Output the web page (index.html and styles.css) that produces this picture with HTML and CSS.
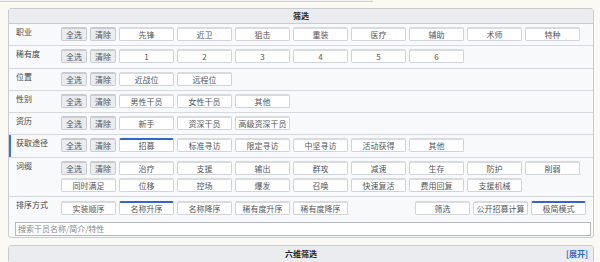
FILE: index.html
```html
<!DOCTYPE html>
<html>
    <head>
        <meta charset="UTF-8">
        <title>筛选</title>
        <link rel="stylesheet" href="styles.css">
    </head>
    <body>
        <div class="topbar"></div>

        <div class="panel">
            <div class="panel-head">筛选</div>

            <div class="row">
                <div class="row-label">职业</div>
                <div class="row-body">
                    <span class="pair"><span class="ctl">全选</span><span class="ctl">清除</span></span>
                    <span class="opt">先锋</span>
                    <span class="opt">近卫</span>
                    <span class="opt">狙击</span>
                    <span class="opt">重装</span>
                    <span class="opt">医疗</span>
                    <span class="opt">辅助</span>
                    <span class="opt">术师</span>
                    <span class="opt">特种</span>
                </div>
            </div>

            <div class="row">
                <div class="row-label">稀有度</div>
                <div class="row-body">
                    <span class="pair"><span class="ctl">全选</span><span class="ctl">清除</span></span>
                    <span class="opt">1</span>
                    <span class="opt">2</span>
                    <span class="opt">3</span>
                    <span class="opt">4</span>
                    <span class="opt">5</span>
                    <span class="opt">6</span>
                </div>
            </div>

            <div class="row">
                <div class="row-label">位置</div>
                <div class="row-body">
                    <span class="pair"><span class="ctl">全选</span><span class="ctl">清除</span></span>
                    <span class="opt">近战位</span>
                    <span class="opt">远程位</span>
                </div>
            </div>

            <div class="row">
                <div class="row-label">性别</div>
                <div class="row-body">
                    <span class="pair"><span class="ctl">全选</span><span class="ctl">清除</span></span>
                    <span class="opt">男性干员</span>
                    <span class="opt">女性干员</span>
                    <span class="opt">其他</span>
                </div>
            </div>

            <div class="row">
                <div class="row-label">资历</div>
                <div class="row-body">
                    <span class="pair"><span class="ctl">全选</span><span class="ctl">清除</span></span>
                    <span class="opt">新手</span>
                    <span class="opt">资深干员</span>
                    <span class="opt">高级资深干员</span>
                </div>
            </div>

            <div class="row focus">
                <div class="row-label">获取途径</div>
                <div class="row-body">
                    <span class="pair"><span class="ctl">全选</span><span class="ctl">清除</span></span>
                    <span class="opt on">招募</span>
                    <span class="opt">标准寻访</span>
                    <span class="opt">限定寻访</span>
                    <span class="opt">中坚寻访</span>
                    <span class="opt">活动获得</span>
                    <span class="opt">其他</span>
                </div>
            </div>

            <div class="row">
                <div class="row-label">词缀</div>
                <div class="row-body">
                    <span class="pair"><span class="ctl">全选</span><span class="ctl">清除</span></span>
                    <span class="opt">治疗</span>
                    <span class="opt">支援</span>
                    <span class="opt">输出</span>
                    <span class="opt">群攻</span>
                    <span class="opt">减速</span>
                    <span class="opt">生存</span>
                    <span class="opt">防护</span>
                    <span class="opt">削弱</span>
                    <span class="opt">同时满足</span>
                    <span class="opt">位移</span>
                    <span class="opt">控场</span>
                    <span class="opt">爆发</span>
                    <span class="opt">召唤</span>
                    <span class="opt">快速复活</span>
                    <span class="opt">费用回复</span>
                    <span class="opt">支援机械</span>
                </div>
            </div>

            <div class="row sort">
                <div class="row-label">排序方式</div>
                <div class="row-body split">
                    <div class="group">
                        <span class="opt">实装顺序</span>
                        <span class="opt on">名称升序</span>
                        <span class="opt">名称降序</span>
                        <span class="opt">稀有度升序</span>
                        <span class="opt">稀有度降序</span>
                    </div>
                    <div class="group">
                        <span class="opt">筛选</span>
                        <span class="opt">公开招募计算</span>
                        <span class="opt on">极简模式</span>
                    </div>
                </div>
            </div>

            <div class="search">
                <input type="text" placeholder="搜索干员名称/简介/特性">
            </div>
        </div>

        <div class="panel fold">
            <div class="panel-head">六维筛选<a class="toggle">[展开]</a></div>
        </div>
    </body>
</html>
```

FILE: styles.css
```css
body{
    margin: 0;
    background: #fbf9f3;
    font-family: "Noto Sans CJK SC", "Noto Sans", sans-serif;
    font-size: 8px;
    color: #333;
}
.topbar{
    width: 373px;
    height: 1px;
    background: #f3f3f3;
    border-bottom: 1px solid #cfcfcf;
}
.panel{
    margin: 6px 6px 0 8px;
    background: #f8f9fa;
    border: 1px solid #c8ccd1;
    border-radius: 3px;
}
.panel-head{
    position: relative;
    height: 14px;
    line-height: 14px;
    background: #eaecf0;
    border-bottom: 1px solid #c8ccd1;
    text-align: center;
    font-weight: bold;
    color: #222;
}
.row{
    display: flex;
    border-bottom: 1px solid #d6d8db;
}
.row.focus{
    box-shadow: inset 2px 0 0 #3a76d8;
}
.row-label{
    width: 45px;
    padding: 3px 0 0 7px;
    line-height: 10px;
    color: #444;
    flex-shrink: 0;
}
.row-body{
    flex: 1;
    display: flex;
    flex-wrap: wrap;
    padding: 3px 0 1px;
}
.row-body.split{
    justify-content: space-between;
    padding-right: 4px;
}
.group{
    display: flex;
}
.pair{
    display: flex;
    width: 55px;
    margin: 0 3px 3.3px 0;
    justify-content: space-between;
}
.ctl,.opt{
    box-sizing: border-box;
    height: 14px;
    line-height: 11px;
    text-align: center;
    border: 1px solid #d0d3d7;
    border-top: 2px solid #d9dbde;
    border-radius: 2px;
    color: #555;
}
.ctl{
    width: 26px;
    background: #eaecf0;
    border-color: #c8ccd1;
}
.opt{
    width: 55px;
    margin: 0 3px 3.3px 0;
    background: #fff;
}
.opt.on{
    border-top: 2px solid #3366cc;
}
.sort{
    border-bottom: none;
}
.sort .row-body{
    padding-top: 4px;
}
.search{
    padding: 2px 2px 1px 6px;
}
.search input{
    display: block;
    box-sizing: border-box;
    width: 100%;
    height: 14px;
    margin: 0;
    padding: 0 2px;
    border: 1px solid #b4b8bd;
    background: #fff;
    font-family: inherit;
    font-size: 8px;
    color: #333;
}
.search input::placeholder{
    color: #888;
}
.fold{
    margin-top: 7px;
}
.fold .panel-head{
    height: 16px;
    line-height: 16px;
    border-bottom: none;
}
.toggle{
    position: absolute;
    right: 5px;
    top: 0;
    color: #3366cc;
    font-weight: bold;
}
```
